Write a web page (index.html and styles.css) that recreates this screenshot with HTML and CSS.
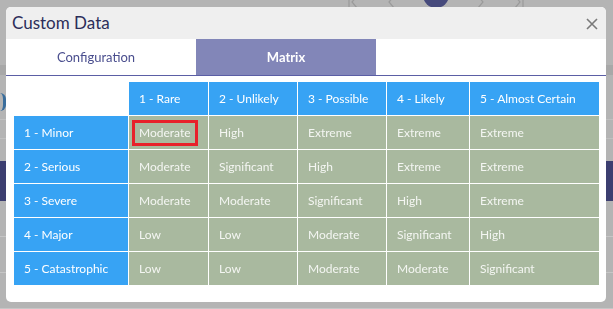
FILE: index.html
```html
<!DOCTYPE html>
<html lang="en">
<head>
  <meta charset="UTF-8">
  <meta name="viewport" content="width=device-width, initial-scale=1.0">
  <title>Custom Data</title>
  <link rel="stylesheet" href="styles.css">
</head>
<body>

  <div class="page">
    <div class="pager">
      <svg class="pg" width="12" height="8" viewBox="0 0 12 8"><path d="M2 -4 V8 M10 -4 L5 2 L10 8" stroke="#9a9a9a" stroke-width="1.2" fill="none"/></svg>
      <svg class="pg" width="12" height="8" viewBox="0 0 12 8"><path d="M9 -4 L4 2 L9 8" stroke="#9a9a9a" stroke-width="1.2" fill="none"/></svg>
      <span class="pg-current"></span>
      <svg class="pg" width="12" height="8" viewBox="0 0 12 8"><path d="M3 -4 L8 2 L3 8" stroke="#9a9a9a" stroke-width="1.2" fill="none"/></svg>
      <svg class="pg" width="12" height="8" viewBox="0 0 12 8"><path d="M2 -4 L7 2 L2 8 M10 -4 V8" stroke="#9a9a9a" stroke-width="1.2" fill="none"/></svg>
    </div>
    <div class="page-tabs"></div>
    <div class="page-label"></div>
    <div class="page-inputs"></div>
    <div class="page-band"></div>
    <div class="page-row"></div>
    <div class="page-row"></div>
    <div class="page-row"></div>
  </div>

  <!-- Modal -->
  <div class="modal">
    <div class="modal-header">
      <h2>Custom Data</h2>
      <button class="close-modal" aria-label="Close">
        <svg width="12" height="12" viewBox="0 0 12 12">
          <path d="M1 1 L11 11 M11 1 L1 11" stroke="#7a7a7a" stroke-width="1.6" fill="none"/>
        </svg>
      </button>
    </div>

    <div class="tabs">
      <div class="tab">Configuration</div>
      <div class="tab active">Matrix</div>
    </div>

    <div class="modal-body">
      <table class="matrix">
        <colgroup>
          <col style="width:115px">
          <col style="width:80px">
          <col style="width:89px">
          <col style="width:89px">
          <col style="width:83px">
          <col style="width:130px">
        </colgroup>
        <thead>
          <tr>
            <th class="corner"></th>
            <th>1 - Rare</th>
            <th>2 - Unlikely</th>
            <th>3 - Possible</th>
            <th>4 - Likely</th>
            <th>5 - Almost Certain</th>
          </tr>
        </thead>
        <tbody>
          <tr>
            <th>1 - Minor</th>
            <td class="selected"><span class="pick">Moderate</span></td>
            <td>High</td>
            <td>Extreme</td>
            <td>Extreme</td>
            <td>Extreme</td>
          </tr>
          <tr>
            <th>2 - Serious</th>
            <td>Moderate</td>
            <td>Significant</td>
            <td>High</td>
            <td>Extreme</td>
            <td>Extreme</td>
          </tr>
          <tr>
            <th>3 - Severe</th>
            <td>Moderate</td>
            <td>Moderate</td>
            <td>Significant</td>
            <td>High</td>
            <td>Extreme</td>
          </tr>
          <tr>
            <th>4 - Major</th>
            <td>Low</td>
            <td>Low</td>
            <td>Moderate</td>
            <td>Significant</td>
            <td>High</td>
          </tr>
          <tr>
            <th>5 - Catastrophic</th>
            <td>Low</td>
            <td>Low</td>
            <td>Moderate</td>
            <td>Moderate</td>
            <td>Significant</td>
          </tr>
        </tbody>
      </table>
    </div>
  </div>

</body>
</html>
```

FILE: styles.css
```css
* {
  margin: 0;
  padding: 0;
  box-sizing: border-box;
}
html, body {
  width: 100%;
  height: 100%;
  background-color: #b4b4b4;
  font-family: 'Lato', 'Liberation Sans', sans-serif;
  overflow: hidden;
}

/* Página ao fundo */
.page {
  width: 100%;
}
.pager {
  display: flex;
  align-items: flex-start;
  height: 8px;
  padding-left: 347px;
  gap: 26px;
}
.pg {
  display: block;
  flex: none;
}
.pg-current {
  width: 26px;
  height: 26px;
  margin-top: -18px;
  border-radius: 50%;
  background-color: #464a7c;
}
.page-tabs {
  margin-top: 57px;
  height: 10px;
  background-color: #a8a8a8;
}
.page-label {
  margin-top: 18px;
  height: 18px;
  width: 6px;
  border-right: 3px solid #3a6d9c;
  border-radius: 0 8px 8px 0;
}
.page-inputs {
  margin-top: 8px;
  height: 20px;
  border-top: 1px solid #c0c0c0;
  border-bottom: 1px solid #c0c0c0;
}
.page-band {
  margin-top: 22px;
  height: 40px;
  background-color: #3c3e70;
}
.page-row {
  height: 36px;
  border-bottom: 1px solid #c6c6c6;
}

/* Modal */
.modal {
  position: fixed;
  top: 7px;
  left: 6px;
  width: 600px;
  height: 295px;
  background-color: #fff;
  border-radius: 5px;
  overflow: hidden;
}
.modal-header {
  height: 32px;
  background-color: #efefef;
  display: flex;
  align-items: center;
  justify-content: space-between;
  padding: 0 7px 0 6px;
}
.modal-header h2 {
  font-size: 17px;
  font-weight: normal;
  color: #2c2e5a;
  line-height: 32px;
}
.close-modal {
  background: none;
  border: none;
  width: 14px;
  height: 14px;
  display: flex;
  align-items: center;
  justify-content: center;
  margin-top: 2px;
}

.tabs {
  display: flex;
  height: 37px;
  border-bottom: 1px solid #5b5ea5;
}
.tab {
  width: 180px;
  margin-right: 10px;
  text-align: center;
  font-size: 13px;
  line-height: 36px;
  color: #4a4e8e;
}
.tab.active {
  width: 180px;
  margin-right: 0;
  background-color: #8286b8;
  color: #fff;
  font-weight: bold;
}

.modal-body {
  padding: 5px 8px 0 7px;
}
.matrix {
  border-collapse: collapse;
  table-layout: fixed;
  width: 586px;
  font-size: 12px;
  color: #fff;
}
.matrix th,
.matrix td {
  border: 1px solid #fff;
  padding: 0 10px;
  text-align: left;
  height: 34px;
  white-space: nowrap;
}
.matrix thead th {
  height: 34px;
  background-color: #37a3f4;
  font-weight: normal;
}
.matrix thead th.corner {
  background-color: #fff;
}
.matrix tbody th {
  background-color: #37a3f4;
  font-weight: normal;
}
.matrix td {
  background-color: #a9b99f;
  color: #f4f6f2;
}
.matrix td.selected {
  padding-left: 3px;
}
.pick {
  display: inline-block;
  border: 3px solid #e8202a;
  padding: 0 4px;
  line-height: 20px;
}
```
